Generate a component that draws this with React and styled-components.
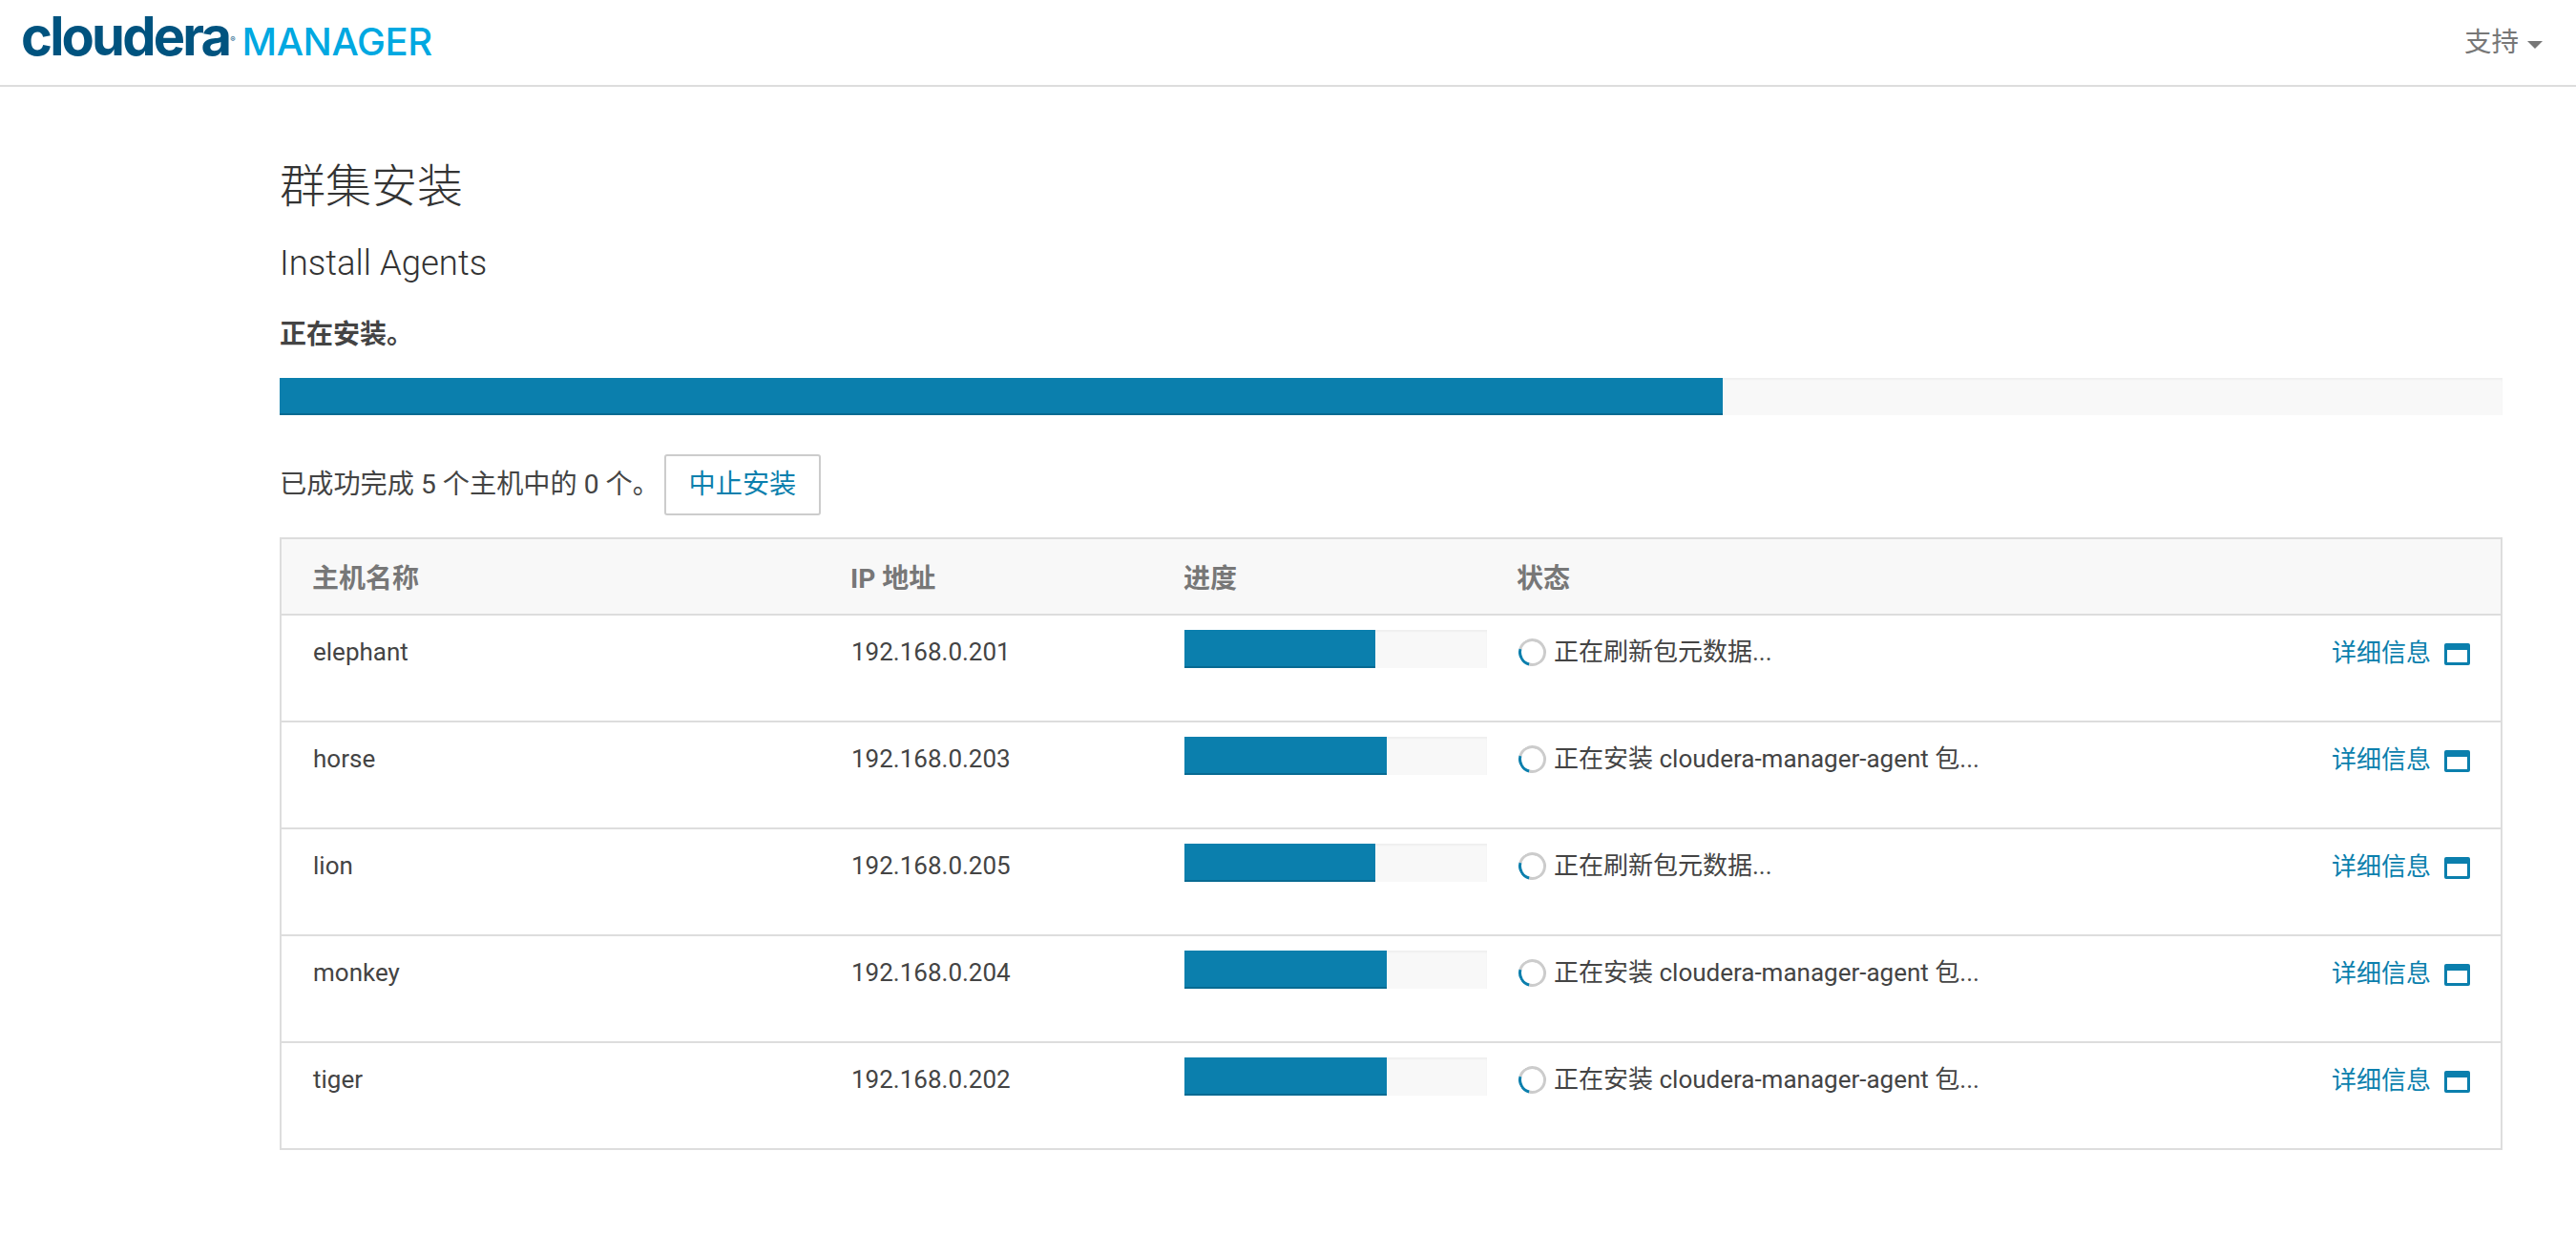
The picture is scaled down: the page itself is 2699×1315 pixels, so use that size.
import React from 'react'
import styled, { createGlobalStyle } from 'styled-components'

const FONT = `Roboto, "Noto Sans CJK SC", sans-serif`

const GlobalStyle = createGlobalStyle`
  html, body {
    margin: 0;
    background: #fff;
    font-family: ${FONT};
    color: #444;
  }
  * { box-sizing: border-box; }
`

const Header = styled.header`
  height: 91px;
  border-bottom: 2px solid #ddd;
  display: flex;
  justify-content: space-between;
  align-items: flex-start;
  padding: 0 35px 0 22px;
`
const Logo = styled.div`
  display: flex;
  align-items: baseline;
  height: 60px;
  padding-top: 13px;
`
const LogoMark = styled.span`
  font-family: Inter, sans-serif;
  font-weight: 700;
  font-size: 56px;
  line-height: 50px;
  letter-spacing: -2.8px;
  color: #00537f;
`
const LogoReg = styled.sup`
  font-family: Inter, sans-serif;
  font-size: 8px;
  line-height: 8px;
  color: #00537f;
  align-self: flex-start;
  margin: 24px 7px 0 1px;
`
const LogoProduct = styled.span`
  font-family: Inter, sans-serif;
  font-weight: 500;
  font-size: 40px;
  line-height: 50px;
  letter-spacing: -0.4px;
  color: #00a8e1;
`
const SupportMenu = styled.div`
  display: flex;
  align-items: center;
  gap: 9px;
  margin-top: 27px;
  font-size: 28.5px;
  line-height: 36px;
  color: #777;
`
const Caret = styled.span`
  width: 0;
  height: 0;
  margin-top: 3px;
  border-left: 8px solid transparent;
  border-right: 8px solid transparent;
  border-top: 8px solid #777;
`
const Main = styled.main`
  padding: 0 77px 0 293px;
`
const Title = styled.h1`
  margin: 75px 0 0;
  font-size: 48px;
  line-height: 60px;
  font-weight: 300;
  color: #333;
`
const Subtitle = styled.h2`
  margin: 28px 0 0;
  font-size: 36.5px;
  line-height: 44px;
  font-weight: 300;
  color: #333;
`
const Status = styled.p`
  margin: 34px 0 0;
  font-size: 28px;
  line-height: 38px;
  font-weight: 700;
`
const Track = styled.div`
  display: flex;
  height: ${(p) => (p.$small ? '40px' : '39px')};
  width: ${(p) => (p.$small ? '317px' : '100%')};
  margin-top: ${(p) => (p.$small ? '0' : '26px')};
  background: #f8f8f8;
  box-shadow: inset 0 2px 2px rgba(0, 0, 0, 0.04);
`
const Fill = styled.div`
  height: 100%;
  background: #0b7fad;
  border-bottom: 2px solid #076a92;
`
const SummaryRow = styled.div`
  display: flex;
  align-items: center;
  gap: 5px;
  margin-top: 41px;
  font-size: 28.2px;
  line-height: 38px;
`
const StopButton = styled.button`
  height: 64px;
  width: 164px;
  padding: 0;
  background: #fff;
  border: 2px solid #ccc;
  border-radius: 3px;
  font: inherit;
  color: #0b7fad;
`
const Table = styled.table`
  width: 100%;
  margin-top: 23px;
  table-layout: fixed;
  border-collapse: collapse;
  border: 2px solid #ddd;
  font-size: 26px;
`
const HeadCell = styled.th`
  width: ${(p) => p.$width || 'auto'};
  height: 80px;
  padding: 0 0 0 32px;
  background: #f8f8f8;
  border-bottom: 2px solid #ddd;
  text-align: left;
  font-size: 28px;
  font-weight: 700;
  color: #777;
`
const Row = styled.tr`
  height: 112px;
  border-bottom: 2px solid #ddd;
`
const Cell = styled.td`
  padding: 15px 0 0 33px;
  vertical-align: top;
  line-height: 46px;
`
const StatusCell = styled.div`
  display: flex;
  align-items: center;
  gap: 8px;
  height: 46px;
  font-size: 26px;
`
const Spinner = styled.span`
  flex: none;
  width: 29px;
  height: 29px;
  margin-left: 1px;
  border-radius: 50%;
  border: 3.5px solid #ccc;
  border-left-color: #0b7fad;
  transform: rotate(-30deg);
`
const DetailCell = styled.div`
  display: flex;
  align-items: center;
  justify-content: flex-end;
  gap: 14px;
  height: 46px;
  padding: 2px 32px 0 0;
  font-size: 26px;
  color: #0b7fad;
`
const WindowIcon = styled.span`
  flex: none;
  width: 27px;
  height: 23px;
  margin-top: 3px;
  border: 3px solid #0b7fad;
  border-top-width: 7px;
  border-radius: 2px;
`

const hosts = [
  { name: 'elephant', ip: '192.168.0.201', pct: 63, status: '正在刷新包元数据...' },
  { name: 'horse', ip: '192.168.0.203', pct: 67, status: '正在安装 cloudera-manager-agent 包...' },
  { name: 'lion', ip: '192.168.0.205', pct: 63, status: '正在刷新包元数据...' },
  { name: 'monkey', ip: '192.168.0.204', pct: 67, status: '正在安装 cloudera-manager-agent 包...' },
  { name: 'tiger', ip: '192.168.0.202', pct: 67, status: '正在安装 cloudera-manager-agent 包...' },
]

const App = () => {
  return (
    <>
      <GlobalStyle />
      <Header>
        <Logo>
          <LogoMark>cloudera</LogoMark>
          <LogoReg>®</LogoReg>
          <LogoProduct>MANAGER</LogoProduct>
        </Logo>
        <SupportMenu>
          支持
          <Caret />
        </SupportMenu>
      </Header>
      <Main>
        <Title>群集安装</Title>
        <Subtitle>Install Agents</Subtitle>
        <Status>正在安装。</Status>
        <Track>
          <Fill style={{ width: '64.9%' }} />
        </Track>
        <SummaryRow>
          已成功完成 5 个主机中的 0 个。
          <StopButton>中止安装</StopButton>
        </SummaryRow>
        <Table>
          <thead>
            <tr>
              <HeadCell $width="565px">主机名称</HeadCell>
              <HeadCell $width="349px">IP 地址</HeadCell>
              <HeadCell $width="349px">进度</HeadCell>
              <HeadCell $width="690px">状态</HeadCell>
              <HeadCell />
            </tr>
          </thead>
          <tbody>
            {hosts.map((h) => (
              <Row key={h.name}>
                <Cell>{h.name}</Cell>
                <Cell>{h.ip}</Cell>
                <Cell>
                  <Track $small>
                    <Fill style={{ width: `${h.pct}%` }} />
                  </Track>
                </Cell>
                <Cell>
                  <StatusCell>
                    <Spinner />
                    {h.status}
                  </StatusCell>
                </Cell>
                <Cell>
                  <DetailCell>
                    详细信息
                    <WindowIcon />
                  </DetailCell>
                </Cell>
              </Row>
            ))}
          </tbody>
        </Table>
      </Main>
    </>
  )
}

export default App
